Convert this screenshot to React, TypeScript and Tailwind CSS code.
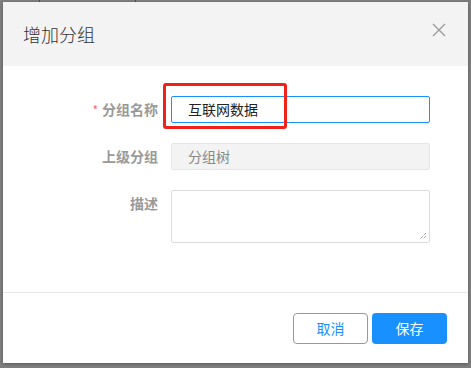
import React from "react";

// ==================== Form Rows ====================

const FONT = "font-['Microsoft_YaHei','Noto_Sans_CJK_SC',sans-serif]";

function Label({ text, required }: { text: string; required?: boolean }) {
  return (
    <div className="w-[168px] shrink-0 pr-[13px] text-right text-[14px] font-bold leading-[27px] text-[#999]">
      {required && <span className="mr-[4px] text-[12px] font-normal text-[#f56c6c]">*</span>}
      {text}
    </div>
  );
}

// ==================== Component ====================

export default function App() {
  return (
    <div className={`relative h-[368px] w-[471px] overflow-hidden bg-[#7e7e7e] ${FONT}`}>
      {/* background page bits peeking out */}
      <div className="absolute left-[39px] top-0 h-[2px] w-px bg-[#3a4a70]" />
      <div className="absolute left-[135px] top-0 h-[2px] w-px bg-[#3a4a70]" />

      <div className="absolute left-[3px] top-[2px] flex h-[361px] w-[465px] flex-col bg-white shadow-[0_1px_3px_rgba(0,0,0,0.3)]">
        {/* Header */}
        <div className="flex h-[64px] items-center justify-between bg-[#f3f3f3] pl-[20px] pr-[22px]">
          <span className="text-[18px] font-light text-[#333]">增加分组</span>
          <svg width="14" height="14" viewBox="0 0 14 14" className="-mt-[8px]">
            <path d="M1 1L13 13M13 1L1 13" stroke="#999" strokeWidth="1.3" />
          </svg>
        </div>

        {/* Body */}
        <div className="flex h-[226px] flex-col gap-[20px] pt-[30px]">
          <div className="flex">
            <Label text="分组名称" required />
            <div className="flex h-[27px] w-[259px] items-center rounded-[2px] border border-[#1890ff] pl-[16px] text-[14px] text-[#222]">
              互联网数据
            </div>
          </div>
          <div className="flex">
            <Label text="上级分组" />
            <div className="flex h-[27px] w-[259px] items-center rounded-[2px] border border-[#e6e6e6] bg-[#f3f3f3] pl-[16px] text-[14px] text-[#888]">
              分组树
            </div>
          </div>
          <div className="flex">
            <Label text="描述" />
            <div className="relative h-[53px] w-[259px] rounded-[2px] border border-[#dcdcdc]">
              <svg width="8" height="8" viewBox="0 0 8 8" className="absolute bottom-[2px] right-[2px]">
                <path d="M7 1L1 7M7 4L4 7" stroke="#777" strokeWidth="1" strokeDasharray="1 1" />
              </svg>
            </div>
          </div>
        </div>

        {/* Footer */}
        <div className="flex flex-1 justify-end gap-[4px] border-t border-[#e8e8e8] pr-[21px] pt-[20px]">
          <button className="h-[31px] w-[75px] rounded-[4px] border border-[#999] bg-white text-[14px] text-[#1890ff]">
            取消
          </button>
          <button className="h-[31px] w-[75px] rounded-[4px] bg-[#1890ff] text-[14px] text-white">
            保存
          </button>
        </div>
      </div>

      {/* highlight annotation */}
      <div className="absolute left-[163px] top-[83px] h-[46px] w-[124px] rounded-[3px] border-[3px] border-[#f0201a]" />
    </div>
  );
}
